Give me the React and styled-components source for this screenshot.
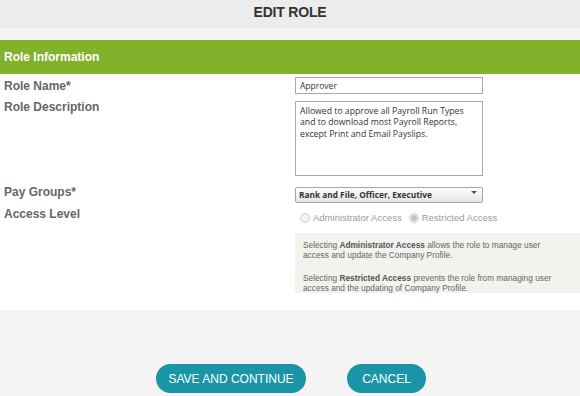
import React from 'react';
import styled, { createGlobalStyle } from 'styled-components';

const GlobalStyle = createGlobalStyle`
  html, body { margin: 0; padding: 0; }
  body {
    width: 580px;
    height: 396px;
    overflow: hidden;
    background: #fff;
    font-family: "Liberation Sans", Arial, sans-serif;
  }
  * { box-sizing: border-box; }
`;

const Page = styled.div`
  display: flex;
  flex-direction: column;
  height: 396px;
`;

const Header = styled.header`
  height: 28px;
  background: #ececec;
  display: flex;
  justify-content: center;
`;

const Title = styled.h1`
  margin: 0;
  font-size: 14px;
  line-height: 24px;
  font-weight: bold;
  color: #333;
  letter-spacing: -0.2px;
`;

const Band = styled.div`
  height: 12px;
  background: #f4f4f4;
`;

const SectionBar = styled.div`
  height: 34px;
  background: #82b22b;
  display: flex;
  align-items: center;
  padding-left: 4px;
  color: #fff;
  font-weight: bold;
  font-size: 12px;
`;

const Form = styled.div`
  height: 236px;
  background: #fff;
  padding-top: 3px;
  display: flex;
  flex-direction: column;
`;

const Row = styled.div`
  display: flex;
  align-items: ${(p) => p.$align || 'center'};
  margin-top: ${(p) => p.$gap || 0}px;
`;

const Label = styled.label`
  width: 295px;
  flex: none;
  padding-left: 4px;
  font-size: 12px;
  line-height: 14px;
  font-weight: bold;
  color: #666;
  margin-top: ${(p) => p.$shift || 0}px;
`;

const TextInput = styled.input`
  width: 188px;
  height: 17px;
  margin: 0;
  border: 1px solid #a9a9a9;
  padding: 0 4px;
  font-family: "Open Sans", sans-serif;
  font-size: 8.5px;
  color: #333;
  background: #fff;
  outline: none;
`;

const TextArea = styled.textarea`
  width: 188px;
  height: 75px;
  margin: 0;
  border: 1px solid #a9a9a9;
  padding: 4px 12px 4px 4px;
  font-family: "Open Sans", sans-serif;
  font-size: 8.7px;
  line-height: 11.3px;
  color: #333;
  resize: none;
  outline: none;
  display: block;
`;

const SelectWrap = styled.div`
  position: relative;
  width: 188px;
  height: 16px;
`;

const Select = styled.select`
  appearance: none;
  -webkit-appearance: none;
  width: 100%;
  height: 100%;
  margin: 0;
  border: 1px solid #a6a6a6;
  border-radius: 2px;
  padding: 0 0 0 3px;
  background: linear-gradient(#ffffff, #e4e4e4);
  font-family: "Open Sans", sans-serif;
  font-weight: bold;
  font-size: 8.3px;
  color: #333;
  outline: none;
`;

const Arrow = styled.span`
  position: absolute;
  right: 6px;
  top: 7px;
  width: 0;
  height: 0;
  border-left: 3px solid transparent;
  border-right: 3px solid transparent;
  border-top: 3px solid #555;
  pointer-events: none;
`;

const FieldColumn = styled.div`
  flex: 1;
  display: flex;
  flex-direction: column;
`;

const RadioGroup = styled.div`
  margin-top: 3px;
  height: 15px;
  display: flex;
  align-items: center;
  padding-left: 5px;
  gap: 7px;
`;

const RadioOption = styled.label`
  display: flex;
  align-items: center;
  gap: 3px;
  font-size: 9.5px;
  color: #9a9a9a;
`;

const Radio = styled.input.attrs({ type: 'radio' })`
  appearance: none;
  -webkit-appearance: none;
  width: 10px;
  height: 10px;
  margin: 0;
  border-radius: 50%;
  border: 1px solid #d2d2d2;
  background: #f3f3f3;
  &:checked {
    background: radial-gradient(circle, #c2c2c2 0 2.6px, #ebebeb 3.2px);
  }
`;

const InfoBox = styled.div`
  margin-top: 8px;
  height: 60px;
  background: #f2f2ee;
  padding: 7px 0 0 8px;
  font-size: 8.3px;
  line-height: 10px;
  color: #666;
`;

const InfoText = styled.p`
  margin: 0;
  max-width: 255px;
  & + & { margin-top: 12.5px; }
  strong { color: #555; }
`;

const Footer = styled.footer`
  flex: 1;
  background: #f4f4f4;
  display: flex;
  justify-content: center;
  align-items: flex-start;
  gap: 41px;
  padding: 54px 0 0 2px;
`;

const Button = styled.button`
  width: ${(p) => p.$width}px;
  height: 29px;
  border: none;
  border-radius: 15px;
  background: #1995a7;
  color: #fff;
  font-family: "Liberation Sans", Arial, sans-serif;
  font-size: 12px;
  padding: 0;
  cursor: pointer;
`;

export default function App() {
  return (
    <>
      <GlobalStyle />
      <Page>
        <Header>
          <Title>EDIT ROLE</Title>
        </Header>
        <Band />
        <SectionBar>Role Information</SectionBar>
        <Form>
          <Row>
            <Label>Role Name*</Label>
            <TextInput defaultValue="Approver" />
          </Row>
          <Row $gap={7} $align="flex-start">
            <Label $shift={-1}>Role Description</Label>
            <TextArea defaultValue="Allowed to approve all Payroll Run Types and to download most Payroll Reports, except Print and Email Payslips." />
          </Row>
          <Row $gap={8}>
            <Label>Pay Groups*</Label>
            <SelectWrap>
              <Select defaultValue="all">
                <option value="all">Rank and File, Officer, Executive</option>
              </Select>
              <Arrow />
            </SelectWrap>
          </Row>
          <Row $gap={7} $align="flex-start">
            <Label>Access Level</Label>
            <FieldColumn>
              <RadioGroup>
                <RadioOption>
                  <Radio name="access" disabled />
                  Administrator Access
                </RadioOption>
                <RadioOption>
                  <Radio name="access" disabled defaultChecked />
                  Restricted Access
                </RadioOption>
              </RadioGroup>
              <InfoBox>
                <InfoText>
                  Selecting <strong>Administrator Access</strong> allows the role to manage user access and update the Company Profile.
                </InfoText>
                <InfoText>
                  Selecting <strong>Restricted Access</strong> prevents the role from managing user access and the updating of Company Profile.
                </InfoText>
              </InfoBox>
            </FieldColumn>
          </Row>
        </Form>
        <Footer>
          <Button $width={150}>SAVE AND CONTINUE</Button>
          <Button $width={79}>CANCEL</Button>
        </Footer>
      </Page>
    </>
  );
}
